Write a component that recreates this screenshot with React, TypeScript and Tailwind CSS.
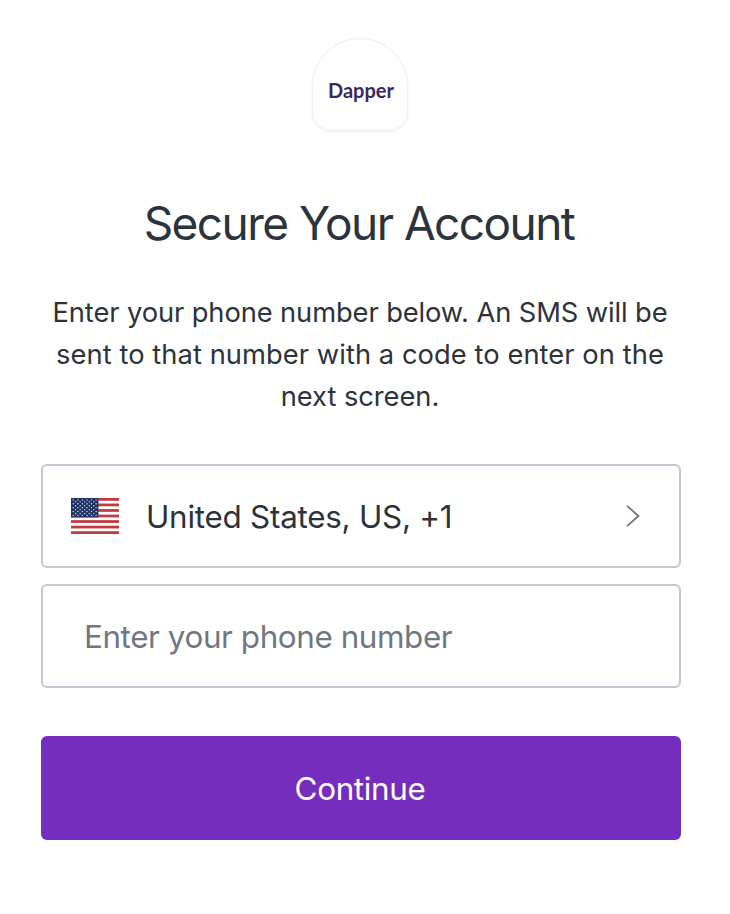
const starRows = [0, 1, 2, 3, 4, 5, 6, 7, 8];

function UsFlag() {
  return (
    <svg className="mb-0.5" width="48" height="36" viewBox="0 0 48 36" aria-label="United States">
      <rect width="48" height="36" fill="#fff" />
      {[0, 2, 4, 6, 8, 10, 12].map((i) => (
        <rect key={i} y={(i * 36) / 13} width="48" height={36 / 13} fill="#c03c42" />
      ))}
      <rect width="27.4" height="19.4" fill="#1f3263" />
      {starRows.map((row) =>
        Array.from({ length: row % 2 ? 5 : 6 }, (_, col) => (
          <circle key={`${row}-${col}`} cx={2.3 + col * 4.56 + (row % 2 ? 2.28 : 0)} cy={1.9 + row * 1.94} r="0.68" fill="#dfe3ef" />
        )),
      )}
    </svg>
  );
}

export default function App() {
  return (
    <main className="flex h-[914px] w-[730px] flex-col items-start bg-white pl-[41px] pt-[38px] font-['Inter',sans-serif] text-[#2d333b]">
      <div className="flex w-[640px] flex-col items-center">
        <div className="mb-px mr-[2px] flex h-[93px] w-[96px] items-center justify-center rounded-b-[20px] rounded-t-[48px] border border-[#ededf5] pl-0.5 pt-[10px] font-['Lato',sans-serif] text-[20px] font-bold text-[#382a61] shadow-[0_1px_3px_#30206014]">Dapper</div>
        <h1 className="mr-1 mt-[56px] whitespace-nowrap text-[46px] leading-[70px] tracking-[-1.55px]">Secure Your Account</h1>
        <p className="mr-[2px] mt-[34px] flex flex-col items-center whitespace-nowrap text-[27.3px] leading-[42px]">
          <span className="tracking-[-0.1px]">Enter your phone number below. An SMS will be</span>
          <span className="tracking-[0.06px]">sent to that number with a code to enter on the</span>
          <span className="tracking-[-0.06px]">next screen.</span>
        </p>
        <button className="mt-[46px] flex h-[104px] w-full items-center rounded-[6px] border-2 border-[#c1c6d0] pl-7 pr-[39px] pt-0.5 text-[31.4px] tracking-[-0.25px]">
          <UsFlag />
          <span className="ml-[27px] pt-0.5">United States, US, +1</span>
          <svg className="mb-0.5 ml-auto" width="14" height="22" viewBox="0 0 14 22" fill="none" stroke="#68727d" strokeWidth="1.7">
            <path d="M1 0.8 12.5 11 1 21.2" />
          </svg>
        </button>
        <input className="mt-4 h-[104px] w-full rounded-[6px] border-2 border-[#c1c6d0] pl-[41px] pt-0.5 text-[31.4px] tracking-[-0.41px] placeholder:text-[#6f7882]" placeholder="Enter your phone number" />
        <button className="mt-12 h-[104px] w-full rounded-[6px] bg-[#752dbd] pr-0.5 pt-1 text-[31.4px] tracking-[-0.35px] text-white">Continue</button>
      </div>
    </main>
  );
}
